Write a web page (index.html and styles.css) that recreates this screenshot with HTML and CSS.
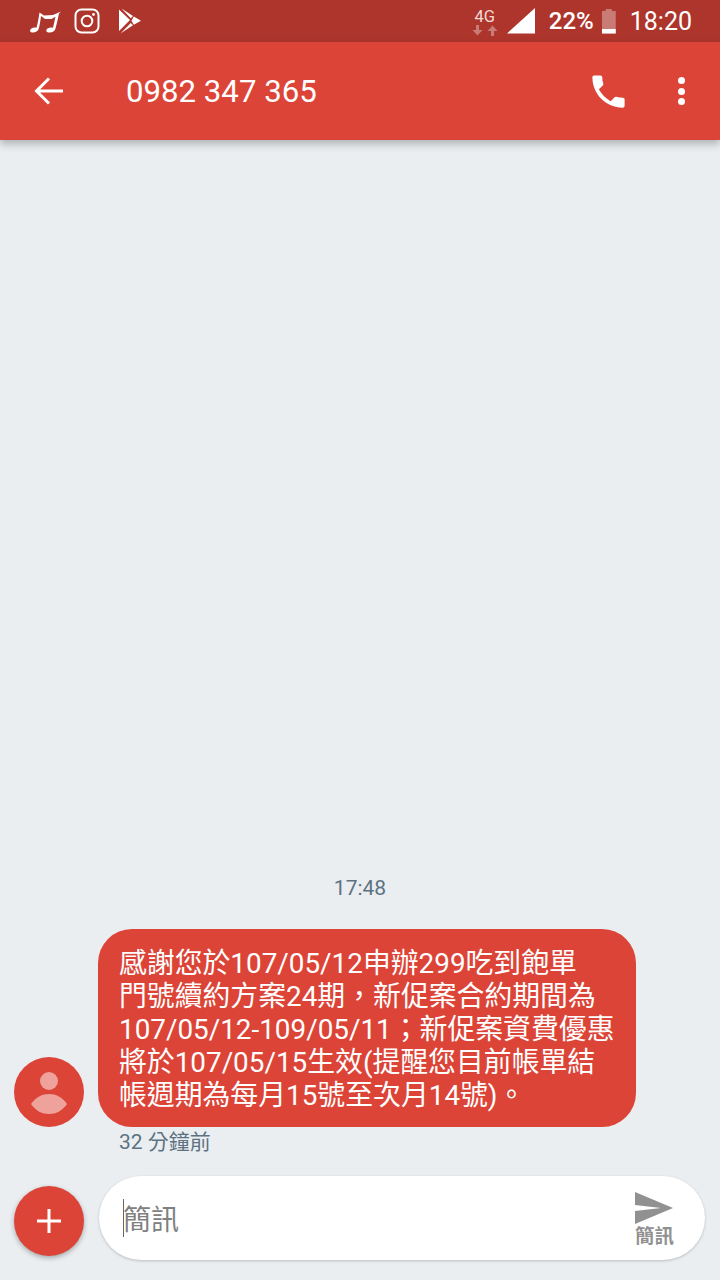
FILE: index.html
```html
<!DOCTYPE html>
<html lang="zh-Hant">
<head>
  <meta charset="UTF-8" />
  <meta name="viewport" content="width=device-width, initial-scale=1.0"/>
  <title>0982 347 365</title>
  <link rel="stylesheet" href="styles.css">
</head>
<body>
  <div class="phone">
    <!-- Status bar -->
    <div class="status-bar">
      <div class="status-left">
        <svg class="ic-music" viewBox="0 0 32 24" width="32" height="24"><path fill="#fff" d="M9.500 2.500 L14 5.500 L23 5 L31 1.500 L29 3.500 C28 8 27 13 25.500 18.500 C25 21.500 21.500 23 18.500 22.500 C16 22 15.500 20 17.500 18.500 C19.500 17.200 21.500 17.200 23 17.800 L25.500 6.800 L21.500 9 L15 9 L11 6 C10.500 10 10 14 8.800 18.500 C8.200 21.500 4.500 23 2 22.500 C-0.500 22 -0.500 20 1.500 18.500 C3 17.300 5 17.200 6.500 17.800 C7.800 13 8.800 7.500 9.500 2.500 Z"/></svg>
        <svg class="ic-insta" viewBox="0 0 26 26" width="26" height="26"><rect x="1.500" y="1.500" width="23" height="23" rx="6" fill="none" stroke="#fff" stroke-width="2"/><circle cx="13" cy="13" r="5.300" fill="none" stroke="#fff" stroke-width="2"/><circle cx="19.500" cy="6.500" r="1.400" fill="#fff"/></svg>
        <svg class="ic-play" viewBox="0 0 24 26" width="24" height="26"><path fill="#fff" d="M1 1.500 L12 12 L1 23 Z M3.500 0.500 L15 8 L12.800 10.300 Z M15.800 8.500 L23 12.800 L15.800 16.800 L13.500 12.700 Z M12.800 15 L15 17.300 L2.500 25.500 Z"/></svg>
      </div>
      <div class="status-right">
        <div class="net">
          <span class="net-label">4G</span>
          <svg viewBox="0 0 26 11" width="26" height="11"><path fill="#fff" fill-opacity=".35" d="M4 0h3v5h3.500L5.500 10.500 0.500 5H4zM19 11h3V6h3.500L20.500 0.500 15.500 6H19z"/></svg>
        </div>
        <svg class="ic-signal" viewBox="0 0 28 26" width="28" height="26"><path fill="#fff" d="M28 0V25.500H0Z"/></svg>
        <span class="battery-text">22%</span>
        <div class="battery"><div class="battery-fill"></div></div>
        <span class="clock">18:20</span>
      </div>
    </div>

    <!-- App bar -->
    <header class="app-bar">
      <svg class="ic-back" viewBox="0 0 30 28" width="30" height="28"><path fill="none" stroke="#fff" stroke-width="3" d="M29 14H3M15 1.500 2.500 14 15 26.500"/></svg>
      <h1 class="title">0982 347 365</h1>
      <svg class="ic-call" viewBox="0 0 24 24" width="43" height="43"><path fill="#fff" d="M6.620 10.790c1.440 2.830 3.760 5.140 6.590 6.590l2.200-2.200c.27-.27.670-.36 1.020-.24 1.120.37 2.330.57 3.570.57.550 0 1 .45 1 1V20c0 .55-.45 1-1 1-9.390 0-17-7.610-17-17 0-.55.450-1 1-1h3.500c.55 0 1 .45 1 1 0 1.250.2 2.450.57 3.570.11.350.03.740-.25 1.020l-2.200 2.200z"/></svg>
      <div class="ic-more"><span></span><span></span><span></span></div>
    </header>

    <!-- Conversation -->
    <main class="conversation">
      <div class="time-sep">17:48</div>
      <div class="message-row">
        <div class="avatar">
          <svg viewBox="0 0 70 70" width="70" height="70"><circle cx="35" cy="24" r="9" fill="#fff" fill-opacity=".5"/><path fill="#fff" fill-opacity=".5" d="M17 47C22 40 28 37 35 37C42 37 48 40 53 47C48 54 42 57 35 57C28 57 22 54 17 47Z"/></svg>
        </div>
        <div class="bubble">感謝您於107/05/12申辦299吃到飽單<br>門號續約方案24期，新促案合約期間為<br>107/05/12-109/05/11；新促案資費優惠<br>將於107/05/15生效(提醒您目前帳單結<br>帳週期為每月15號至次月14號)。</div>
      </div>
      <div class="msg-time">32 分鐘前</div>
    </main>

    <!-- Compose -->
    <footer class="compose">
      <div class="add-btn">
        <svg viewBox="0 0 26 26" width="26" height="26"><path fill="#fff" d="M11.500 1h3v10.500H25v3H14.500V25h-3V14.500H1v-3h10.500z"/></svg>
      </div>
      <div class="input-box">
        <span class="caret"></span>
        <span class="placeholder">簡訊</span>
        <div class="send">
          <svg viewBox="0 0 38 32" width="38" height="32"><path fill="#919191" d="M0 0 38 16 0 32V19L26 16 0 13Z"/></svg>
          <span class="send-label">簡訊</span>
        </div>
      </div>
    </footer>
  </div>
</body>
</html>
```

FILE: styles.css
```css
* {
  box-sizing: border-box;
}

body {
  margin: 0;
  font-family: Roboto, 'Noto Sans CJK TC', sans-serif;
  background: #eaeef1;
}

.phone {
  width: 720px;
  height: 1280px;
  display: flex;
  flex-direction: column;
  overflow: hidden;
}

.status-bar {
  height: 42px;
  flex: none;
  background: #ad352c;
  color: #fff;
  display: flex;
  justify-content: space-between;
  align-items: center;
  padding: 0 28px 0 30px;
}

.status-left {
  display: flex;
  align-items: center;
  gap: 12px;
}

.ic-music {
  margin-top: 2px;
}

.ic-play {
  margin-left: 6px;
}

.status-right {
  display: flex;
  align-items: center;
}

.net {
  width: 26px;
  display: flex;
  flex-direction: column;
  align-items: center;
  margin-top: 2px;
}

.net-label {
  font-size: 16.500px;
  line-height: 16px;
  color: #f3d9d6;
}

.ic-signal {
  margin-left: 9px;
  margin-top: -1px;
}

.battery-text {
  margin-left: 14px;
  font-size: 24px;
  font-weight: 500;
}

.battery {
  width: 14px;
  height: 25px;
  margin-left: 8px;
  background: rgba(255, 255, 255, 0.35);
  clip-path: polygon(28% 0, 72% 0, 72% 10%, 100% 10%, 100% 100%, 0 100%, 0 10%, 28% 10%);
  display: flex;
  align-items: flex-end;
}

.battery-fill {
  width: 100%;
  height: 5px;
  background: #fff;
}

.clock {
  margin-left: 14px;
  font-size: 25px;
}

.app-bar {
  height: 98px;
  flex: none;
  background: #dc4437;
  color: #fff;
  display: flex;
  align-items: center;
  padding: 0 35.500px 0 34px;
  box-shadow: 0 4px 8px rgba(0, 0, 0, 0.25);
  position: relative;
}

.title {
  margin: 1px 0 0 62px;
  font-size: 31.200px;
  font-weight: 400;
  flex: 1;
}

.ic-more {
  display: flex;
  flex-direction: column;
  gap: 3.500px;
  margin-left: 48px;
}

.ic-more span {
  width: 7px;
  height: 7px;
  border-radius: 50%;
  background: #fff;
}

.conversation {
  flex: 1;
  display: flex;
  flex-direction: column;
  justify-content: flex-end;
  padding: 0 14px;
}

.time-sep {
  text-align: center;
  font-size: 21px;
  line-height: 24px;
  color: #5c7282;
  margin-bottom: 29px;
}

.message-row {
  display: flex;
  align-items: flex-end;
}

.avatar {
  width: 70px;
  height: 70px;
  border-radius: 50%;
  background: #dc4437;
}

.bubble {
  width: 538px;
  height: 198px;
  margin-left: 14px;
  padding: 18px 0 0 21px;
  background: #dc4437;
  color: #fff;
  border-radius: 34px;
  font-size: 27.850px;
  line-height: 33px;
  white-space: nowrap;
}

.msg-time {
  margin: 2px 0 21px 105px;
  font-size: 21px;
  line-height: 26px;
  color: #5c7282;
}

.compose {
  flex: none;
  display: flex;
  align-items: center;
  padding: 0 15px 20px 14px;
}

.add-btn {
  width: 70px;
  height: 70px;
  margin-top: 5px;
  border-radius: 50%;
  background: #dc4437;
  display: flex;
  align-items: center;
  justify-content: center;
  box-shadow: 0 2px 5px rgba(0, 0, 0, 0.3);
}

.input-box {
  flex: 1;
  height: 84px;
  margin-left: 15px;
  padding: 0 31px 0 24px;
  background: #fff;
  border-radius: 42px;
  display: flex;
  align-items: center;
  box-shadow: 0 1px 3px rgba(0, 0, 0, 0.2);
}

.caret {
  width: 1px;
  height: 38px;
  background: #666;
}

.placeholder {
  flex: 1;
  margin-left: -1px;
  font-size: 28px;
  color: #808080;
}

.send {
  display: flex;
  flex-direction: column;
  align-items: center;
  margin-top: 6px;
}

.send-label {
  font-size: 19.500px;
  line-height: 26px;
  font-weight: 700;
  color: #919191;
}
```
